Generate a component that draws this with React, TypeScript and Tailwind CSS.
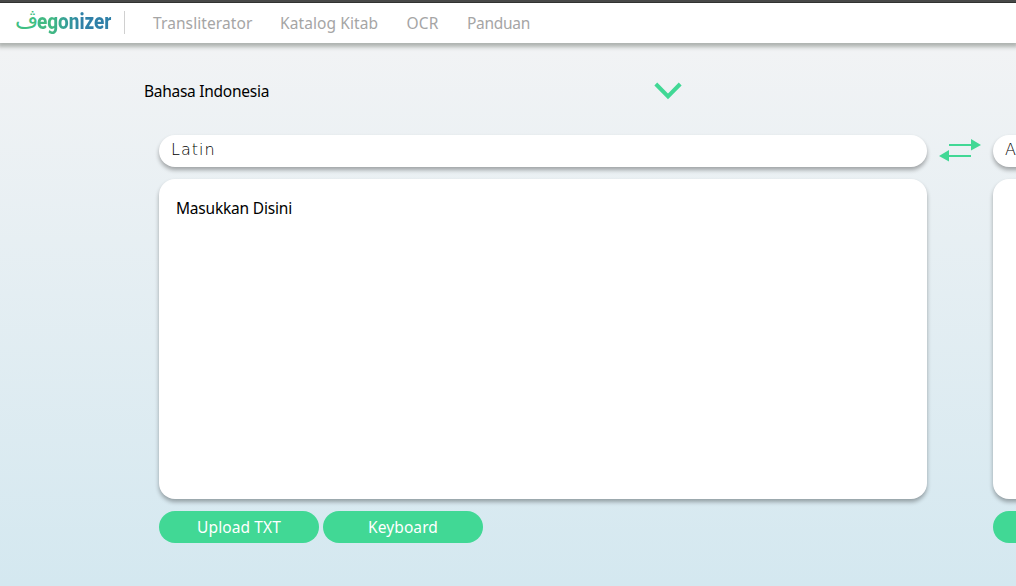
const navItems = [
  { label: 'Transliterator', cls: 'w-[127px] tracking-[0.1px]' },
  { label: 'Katalog Kitab', cls: 'w-[126.5px] tracking-[0.1px]' },
  { label: 'OCR', cls: 'w-[60.5px] tracking-[0.2px]' },
  { label: 'Panduan', cls: 'w-[80px] tracking-[-0.3px]' },
];

function Logo() {
  return (
    <div className="flex h-[30px] w-[96px] items-center" dir="ltr">
      <span className="-mt-1 w-[21px] shrink-0 whitespace-nowrap font-['DejaVu_Sans',sans-serif] text-[22px] leading-[30px] text-[#3fbf84]">
        <span className="inline-block origin-left -translate-x-px scale-x-[1.02]">ڤ</span>
      </span>
      <span className="-mt-[3px] inline-block origin-left scale-x-[0.86] bg-linear-to-r from-[#42b983] from-20% to-[#2f80a8] to-60% bg-clip-text font-[Roboto,sans-serif] text-[22px] font-extrabold leading-[30px] text-transparent">
        egonizer
      </span>
    </div>
  );
}

function Header() {
  return (
    <header className="relative flex h-10 items-center bg-white pl-4 shadow-[0_2px_4px_2px_rgba(80,90,80,0.42)]">
      <Logo />
      <div className="-mt-px ml-3 h-[23px] w-px bg-[#d0d0d0]" />
      <nav className="ml-7 flex text-[15.5px] leading-6 text-[#a5a5a5]">
        {navItems.map((item) => (
          <a key={item.label} className={`${item.cls} whitespace-nowrap`}>{item.label}</a>
        ))}
      </nav>
    </header>
  );
}

function Panel({ title, placeholder, actions }: { title: string; placeholder: string; actions: string[] }) {
  return (
    <section className="w-[768px] shrink-0">
      <div className="h-8 rounded-2xl bg-white pl-3 font-['DejaVu_Sans','DejaVu_Sans_Light',sans-serif] text-[16px] font-extralight leading-[29px] tracking-[1px] text-black shadow-[0_3px_4px_rgba(0,0,0,0.32)]">
        {title}
      </div>
      <div className="mt-3 h-80 rounded-2xl bg-white px-[17px] pt-[17px] text-[15.5px] leading-6 tracking-[-0.2px] text-black shadow-[0_3px_4px_rgba(0,0,0,0.32)]">
        {placeholder}
      </div>
      <div className="mt-3 flex gap-1">
        {actions.map((action) => (
          <button key={action} className="h-8 w-40 rounded-2xl bg-[#41d895] text-[15.5px] leading-8 tracking-[0.1px] text-white">
            {action}
          </button>
        ))}
      </div>
    </section>
  );
}

export default function App() {
  return (
    <div className="flex h-[586px] w-[1016px] flex-col overflow-hidden bg-linear-to-b from-[#f4f4f5] to-[#d4e8f0] font-['Noto_Sans',sans-serif]">
      <div className="h-[3px] shrink-0 border-b border-[#2c2c2c] bg-[#484848]" />
      <Header />
      <main className="pt-9">
        <div className="ml-36 flex h-6 w-[538px] items-center justify-between text-[15.5px] leading-6 tracking-[-0.27px] text-black">
          <span>Bahasa Indonesia</span>
          <svg width="28" height="18" viewBox="0 0 28 18" fill="none">
            <path d="M1.8 2L14 14.4L26.2 2" stroke="#41d895" strokeWidth="4" />
          </svg>
        </div>
        <div className="ml-[159px] mt-8 flex w-[1602px]">
          <Panel title="Latin" placeholder="Masukkan Disini" actions={['Upload TXT', 'Keyboard']} />
          <button className="flex h-8 w-[66px] shrink-0 items-center justify-center" aria-label="Swap">
            <svg width="42" height="24" viewBox="0 0 42 24" fill="#41d895">
              <path d="M10 5H32V0L42 6L32 11.5V7H10ZM32 16H10V11L0 17L10 22.5V18H32Z" />
            </svg>
          </button>
          <Panel title="A" placeholder="" actions={['']} />
        </div>
      </main>
    </div>
  );
}
